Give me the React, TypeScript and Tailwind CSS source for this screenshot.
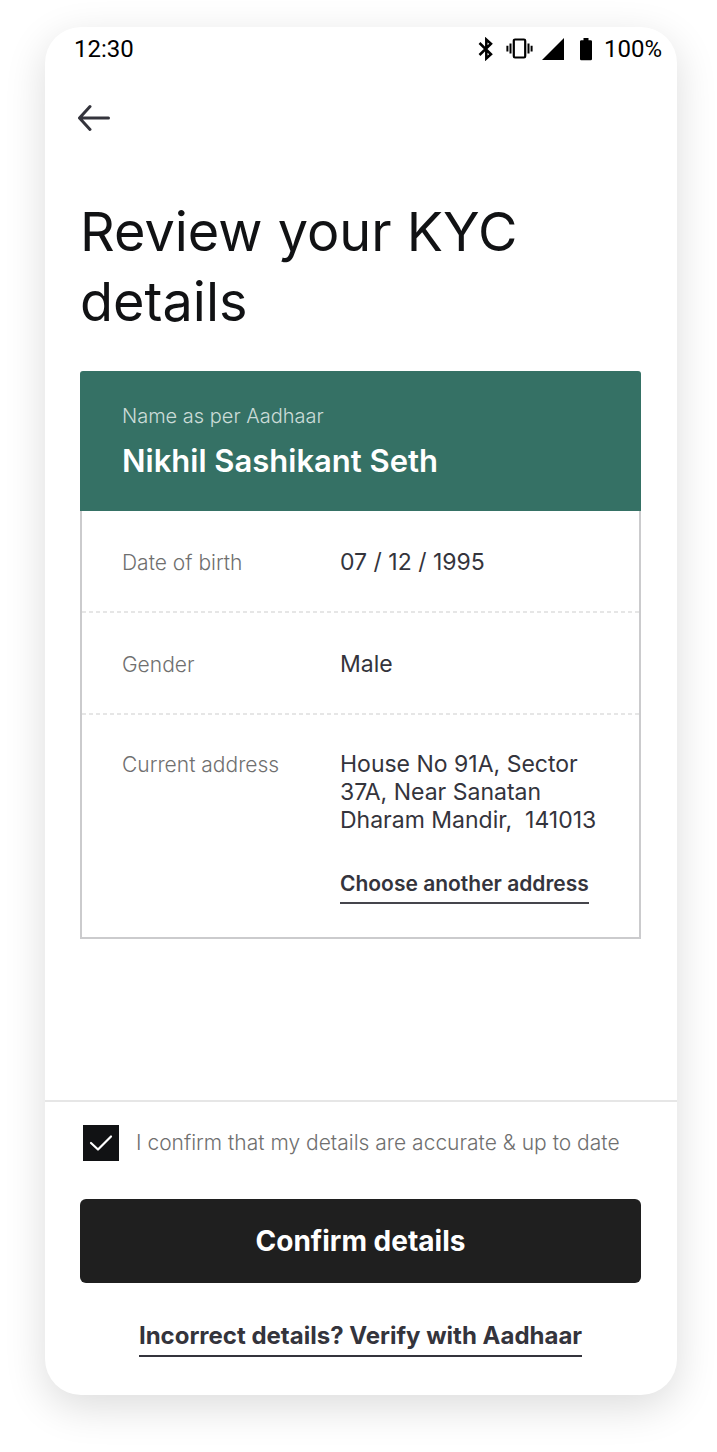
import { useState } from "react";
import type { ReactNode } from "react";

function StatusBar() {
  return (
    <div className="flex h-11 items-center justify-between pl-[29px] pr-[15px] font-['Roboto',sans-serif] text-[24px] leading-[30px] text-black">
      <span>12:30</span>
      <div className="flex items-center">
        <svg className="h-6 w-4" viewBox="0 0 16 24" fill="none" stroke="currentColor" strokeWidth="2.5" aria-hidden="true">
          <path d="M1.500 6 L13 17.300 L8.300 21.500 V2.500 L13 6.700 L1.500 18" />
        </svg>
        <svg className="ml-3 h-6 w-7" viewBox="0 0 28 24" fill="none" stroke="currentColor" strokeWidth="2.200" aria-hidden="true">
          <rect x="7.800" y="2.500" width="11.400" height="18" rx="1.200" />
          <path d="M4.500 6.500V16.500M1.400 8.700V14.500M22.500 6.500V16.500M25.600 8.700V14.500" strokeWidth="2" />
        </svg>
        <svg className="ml-2 h-6 w-6" viewBox="0 0 24 24" fill="currentColor" aria-hidden="true">
          <path d="M0 23H22V1Z" />
        </svg>
        <svg className="ml-3.5 h-6 w-3" viewBox="0 0 12 24" fill="currentColor" aria-hidden="true">
          <path d="M3.500 1H8.500V3.200H10.700Q12 3.200 12 4.500V22Q12 23.300 10.700 23.300H1.300Q0 23.300 0 22V4.500Q0 3.200 1.300 3.200H3.500Z" />
        </svg>
        <span className="ml-3">100%</span>
      </div>
    </div>
  );
}

function DetailRow({ label, children }: { label: string; children: ReactNode }) {
  return (
    <div className="flex items-baseline bg-[repeating-linear-gradient(90deg,#e6e6e6_0_4px,transparent_4px_7px)] bg-[length:100%_2px] bg-bottom bg-no-repeat pt-[37px] pr-8 pb-9 pl-10 last:bg-none last:pt-[35px] last:pb-[33px]">
      <dt className="w-[218px] shrink-0 text-[21px] leading-7 font-light text-[#6f6f6f]">{label}</dt>
      <dd className="min-w-0 text-[23px] leading-7 text-[#34343c]">{children}</dd>
    </div>
  );
}

export default function App() {
  const [confirmed, setConfirmed] = useState(true);

  return (
    <div className="min-h-screen bg-white pt-[27px] pr-10 pb-[57px] pl-[45px] font-['Inter',sans-serif]">
      <main className="flex flex-col rounded-[36px] bg-white shadow-[0_12px_42px_rgba(0,0,0,0.14)]">
        <StatusBar />

        <div className="pr-9 pl-[35px]">
          <button type="button" aria-label="Back" className="-ml-1 mt-7 block p-0.5 text-[#34343c]">
            <svg className="h-8 w-8" viewBox="0 0 32 32" fill="none" stroke="currentColor" strokeWidth="3" strokeLinecap="round" strokeLinejoin="round" aria-hidden="true">
              <path d="M30.500 17H1.500M12 5.500L1.500 17L12 28.500" />
            </svg>
          </button>

          <h1 className="mt-[62px] text-[54px] leading-[70px] text-[#111214]">
            Review your KYC
            <br />
            details
          </h1>

          <section className="mt-[34px]">
            <div className="rounded-t-[3px] bg-[#357165] px-[42px] pt-[30px] pb-7">
              <p className="text-[20px] leading-[30px] font-light text-[#cbdcd8]">Name as per Aadhaar</p>
              <p className="mt-2 text-[31px] leading-11 font-semibold text-white">Nikhil Sashikant Seth</p>
            </div>
            <dl className="border-2 border-t-0 border-[#cbcbcd]">
              <DetailRow label="Date of birth">07 / 12 / 1995</DetailRow>
              <DetailRow label="Gender">Male</DetailRow>
              <DetailRow label="Current address">
                <p>
                  House No 91A, Sector
                  <br />
                  37A, Near Sanatan
                  <br />
                  Dharam Mandir,&nbsp; 141013
                </p>
                <a href="#address" className="mt-[35px] block w-fit border-b-2 border-[#45454c] pb-[3px] text-[21px] leading-[30px] font-semibold">
                  Choose another address
                </a>
              </DetailRow>
            </dl>
          </section>
        </div>

        <footer className="mt-[161px] border-t-2 border-[#e6e6e6] pt-[23px] pr-9 pb-[38px] pl-[35px]">
          <div className="flex items-center pl-[3px]">
            <span className="grid size-9 shrink-0 place-items-center">
              <input
                id="confirm"
                type="checkbox"
                checked={confirmed}
                onChange={(event) => setConfirmed(event.target.checked)}
                className="peer col-start-1 row-start-1 size-9 appearance-none border border-[#111214] checked:bg-[#111214]"
              />
              <svg className="pointer-events-none invisible col-start-1 row-start-1 size-9 peer-checked:visible" viewBox="0 0 36 36" fill="none" stroke="white" strokeWidth="2.200" strokeLinecap="round" strokeLinejoin="round" aria-hidden="true">
                <path d="M8 18L15 24.500L28 11.500" />
              </svg>
            </span>
            <label htmlFor="confirm" className="ml-[17px] text-[21px] leading-[30px] font-light text-[#6f6f6f]">
              I confirm that my details are accurate &amp; up to date
            </label>
          </div>
          <button type="button" className="mt-[38px] block h-21 w-full rounded-md bg-[#1f1f1f] text-[28px] leading-9 font-bold text-white">
            Confirm details
          </button>
          <div className="mt-9 flex justify-center">
            <a href="#verify" className="border-b-2 border-[#34343c] pb-0.5 text-[24px] leading-[34px] font-bold text-[#34343c]">
              Incorrect details? Verify with Aadhaar
            </a>
          </div>
        </footer>
      </main>
    </div>
  );
}
